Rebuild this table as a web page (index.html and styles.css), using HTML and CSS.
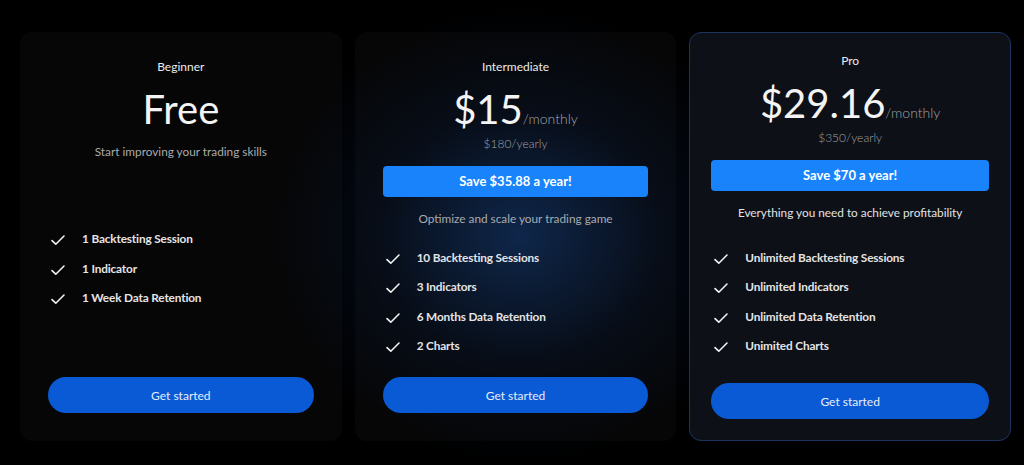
FILE: index.html
```html
<!DOCTYPE html>
<html lang="en">
<head>
<meta charset="utf-8">
<title>Pricing</title>
<link rel="stylesheet" href="styles.css">
</head>
<body>
<main class="pricing">
  <section class="card">
    <h3 class="plan">Beginner</h3>
    <div class="price"><span class="amount">Free</span></div>
    <p class="desc">Start improving your trading skills</p>
    <ul class="features">
      <li><svg class="check" viewBox="0 0 16 16"><path d="M2 8.6l3.8 3.6L14 4"/></svg>1 Backtesting Session</li>
      <li><svg class="check" viewBox="0 0 16 16"><path d="M2 8.6l3.8 3.6L14 4"/></svg>1 Indicator</li>
      <li><svg class="check" viewBox="0 0 16 16"><path d="M2 8.6l3.8 3.6L14 4"/></svg>1 Week Data Retention</li>
    </ul>
    <button class="cta">Get started</button>
  </section>

  <section class="card">
    <h3 class="plan">Intermediate</h3>
    <div class="price"><span class="amount">$15</span><span class="per">/monthly</span></div>
    <p class="yearly">$180/yearly</p>
    <div class="save">Save $35.88 a year!</div>
    <p class="desc">Optimize and scale your trading game</p>
    <ul class="features">
      <li><svg class="check" viewBox="0 0 16 16"><path d="M2 8.6l3.8 3.6L14 4"/></svg>10 Backtesting Sessions</li>
      <li><svg class="check" viewBox="0 0 16 16"><path d="M2 8.6l3.8 3.6L14 4"/></svg>3 Indicators</li>
      <li><svg class="check" viewBox="0 0 16 16"><path d="M2 8.6l3.8 3.6L14 4"/></svg>6 Months Data Retention</li>
      <li><svg class="check" viewBox="0 0 16 16"><path d="M2 8.6l3.8 3.6L14 4"/></svg>2 Charts</li>
    </ul>
    <button class="cta">Get started</button>
  </section>

  <section class="card card--pro">
    <h3 class="plan">Pro</h3>
    <div class="price"><span class="amount">$29.16</span><span class="per">/monthly</span></div>
    <p class="yearly">$350/yearly</p>
    <div class="save">Save $70 a year!</div>
    <p class="desc desc--bright">Everything you need to achieve profitability</p>
    <ul class="features">
      <li><svg class="check" viewBox="0 0 16 16"><path d="M2 8.6l3.8 3.6L14 4"/></svg>Unlimited Backtesting Sessions</li>
      <li><svg class="check" viewBox="0 0 16 16"><path d="M2 8.6l3.8 3.6L14 4"/></svg>Unlimited Indicators</li>
      <li><svg class="check" viewBox="0 0 16 16"><path d="M2 8.6l3.8 3.6L14 4"/></svg>Unlimited Data Retention</li>
      <li><svg class="check" viewBox="0 0 16 16"><path d="M2 8.6l3.8 3.6L14 4"/></svg>Unimited Charts</li>
    </ul>
    <button class="cta">Get started</button>
  </section>
</main>
</body>
</html>
```

FILE: styles.css
```css
* { box-sizing: border-box; }

html, body {
  margin: 0;
  height: 100%;
}

body {
  background: #000;
  font-family: Lato, "Noto Sans", sans-serif;
  color: #ececec;
  overflow: hidden;
}

.pricing {
  height: 465px;
  display: grid;
  grid-template-columns: repeat(3, 1fr);
  column-gap: 13px;
  padding: 32px 13px 24px 20px;
  background:
    radial-gradient(ellipse 260px 230px at 520px 235px, rgba(16, 56, 118, 0.6), rgba(10, 32, 72, 0.25) 55%, rgba(0, 0, 0, 0) 100%),
    #000;
}

.card {
  display: flex;
  flex-direction: column;
  align-items: stretch;
  padding: 28px;
  border-radius: 12px;
  background: rgba(255, 255, 255, 0.022);
  text-align: center;
}

.card--pro {
  padding: 21px;
  background: #0d1016;
  border: 1px solid #1d3460;
}

.plan {
  margin: 0;
  font-size: 12px;
  line-height: 14px;
  font-weight: 400;
  color: #ececec;
}

.price {
  margin-top: 11px;
  display: flex;
  justify-content: center;
  align-items: baseline;
}

.amount {
  font-size: 40px;
  line-height: 48px;
  font-weight: 400;
  color: #f4f4f4;
}

.per {
  font-size: 14px;
  font-weight: 300;
  color: #a2a4aa;
}

.yearly {
  margin: 3px 0 0;
  font-size: 12px;
  line-height: 15px;
  font-weight: 300;
  color: #a2a4aa;
}

.save {
  margin-top: 15px;
  height: 31px;
  line-height: 31px;
  border-radius: 4px;
  background: #1883fb;
  color: #fff;
  font-size: 13px;
  font-weight: 700;
}

.desc {
  margin: 11px 0 0;
  font-size: 11.8px;
  line-height: 15px;
  font-weight: 400;
  color: #a9abb0;
}

.save + .desc {
  margin-top: 14px;
}

.desc--bright {
  color: #e2e3e6;
}

.features {
  list-style: none;
  margin: auto 0;
  padding: 0;
  display: flex;
  flex-direction: column;
  gap: 11.5px;
  text-align: left;
}

.features li {
  display: flex;
  align-items: center;
  height: 18px;
  font-size: 11.8px;
  font-weight: 700;
  color: #e4e4e6;
  letter-spacing: -0.15px;
}

.check {
  width: 16px;
  height: 16px;
  margin: 3px 16px 0 2px;
  flex: none;
  fill: none;
  stroke: #f2f2f2;
  stroke-width: 1.6;
  stroke-linecap: round;
  stroke-linejoin: round;
}

.cta {
  flex: none;
  height: 36px;
  width: 100%;
  border: 0;
  border-radius: 18px;
  background: #0b5ad5;
  color: #e6edfb;
  font-family: inherit;
  font-size: 12px;
  font-weight: 400;
  cursor: pointer;
}
```
